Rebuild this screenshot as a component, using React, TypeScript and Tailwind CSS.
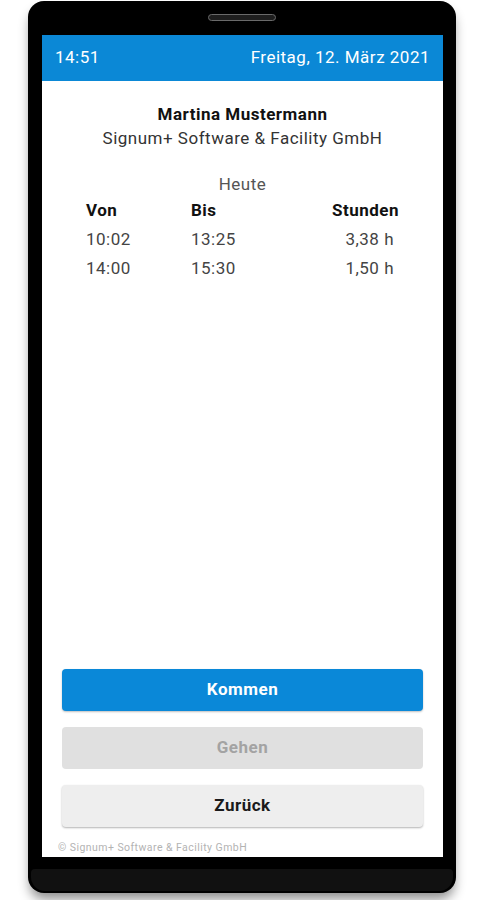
import React from "react";

const font = { fontFamily: "Roboto, 'Noto Sans', Arial, sans-serif" };

export default function App() {
  const rows = [
    ["10:02", "13:25", "3,38 h"],
    ["14:00", "15:30", "1,50 h"],
  ];
  return (
    <div className="w-[483px] h-[900px] bg-white overflow-hidden" style={font}>
      <div className="ml-[28px] mt-[1px] w-[428px] h-[892px] bg-black rounded-[16px] flex flex-col shadow-[0_8px_12px_-2px_rgba(0,0,0,0.45)]">
        <div className="h-[34px] flex justify-center pt-[13px]">
          <div className="w-[68px] h-[7px] rounded-full bg-[#1e1e1e] border border-[#6a6a6a]" />
        </div>
        <div className="ml-[14px] w-[401px] h-[822px] bg-white flex flex-col">
          <div className="h-[46px] bg-[#0b88d6] flex items-center justify-between px-[13px] text-white text-[17px] tracking-[0.5px]">
            <span>14:51</span>
            <span>Freitag, 12. März 2021</span>
          </div>
          <div className="flex-1 flex flex-col">
            <div className="pt-[21px] text-center text-[17px] tracking-[0.5px] leading-[24px]">
              <div className="font-bold text-[#111]">Martina Mustermann</div>
              <div className="text-[#333]">Signum+ Software &amp; Facility GmbH</div>
              <div className="mt-[22px] text-[#555]">Heute</div>
            </div>
            <div className="px-[44px] text-[17px] tracking-[0.5px]">
              <div className="flex h-[29px] items-center font-bold text-[#111]">
                <span className="w-[105px]">Von</span>
                <span className="flex-1">Bis</span>
                <span>Stunden</span>
              </div>
              {rows.map((r, i) => (
                <div key={i} className="flex h-[29px] items-center text-[#444]">
                  <span className="w-[105px]">{r[0]}</span>
                  <span className="flex-1">{r[1]}</span>
                  <span className="pr-[5px]">{r[2]}</span>
                </div>
              ))}
            </div>
            <div className="flex-1" />
            <div className="px-[20px] flex flex-col gap-[16px] text-[17px] tracking-[0.5px] font-bold">
              <div className="h-[42px] rounded-[4px] bg-[#0a88d8] text-white flex items-center justify-center shadow-[0_1px_2px_rgba(0,0,0,0.25)]">
                Kommen
              </div>
              <div className="h-[42px] rounded-[4px] bg-[#e0e0e0] text-[#a3a3a3] flex items-center justify-center">
                Gehen
              </div>
              <div className="h-[42px] rounded-[4px] bg-[#eeeeee] text-[#1a1a1a] flex items-center justify-center shadow-[0_1px_2px_rgba(0,0,0,0.3)]">
                Zurück
              </div>
            </div>
            <div className="h-[30px] pt-[16px] pl-[16px] text-[10.5px] tracking-[0.45px] leading-[10px] text-[#b3b3b3]">
              © Signum+ Software &amp; Facility GmbH
            </div>
          </div>
        </div>
        <div className="flex-1 flex flex-col justify-end px-[3px] pb-[2px]">
          <div className="h-[22px] bg-[#111111] rounded-b-[14px] rounded-t-[4px]" />
        </div>
      </div>
    </div>
  );
}
